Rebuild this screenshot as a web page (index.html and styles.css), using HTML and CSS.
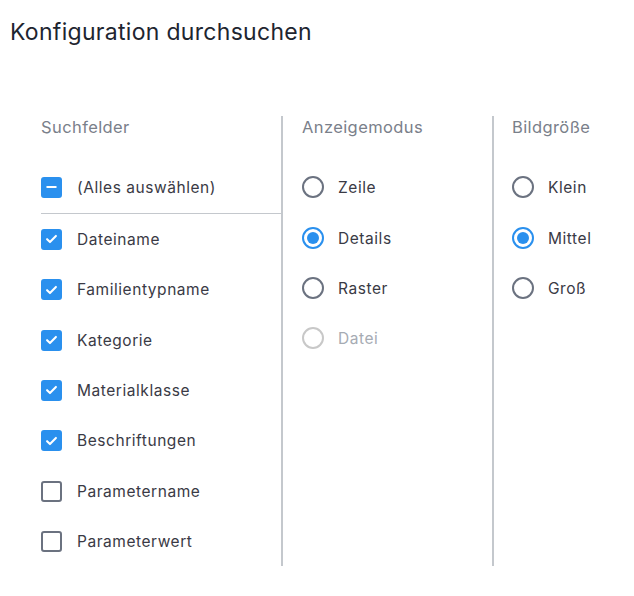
FILE: index.html
```html
<!DOCTYPE html>
<html lang="de">
<head>
<meta charset="utf-8">
<link rel="stylesheet" href="styles.css">
</head>
<body>
<div class="dialog">
  <h1 class="title">Konfiguration durchsuchen</h1>
  <div class="columns">
    <section class="col col-fields">
      <div class="col-head">Suchfelder</div>
      <div class="list">
        <label class="row row-all"><span class="cb cb-mixed"><svg viewBox="0 0 20 20"><path d="M5 10h10" /></svg></span><span class="lbl">(Alles auswählen)</span></label>
        <div class="sep"></div>
        <label class="row"><span class="cb cb-on"><svg viewBox="0 0 20 20"><path d="M4.8 10.2l3.4 3.4 7-7.2" /></svg></span><span class="lbl">Dateiname</span></label>
        <label class="row"><span class="cb cb-on"><svg viewBox="0 0 20 20"><path d="M4.8 10.2l3.4 3.4 7-7.2" /></svg></span><span class="lbl">Familientypname</span></label>
        <label class="row"><span class="cb cb-on"><svg viewBox="0 0 20 20"><path d="M4.8 10.2l3.4 3.4 7-7.2" /></svg></span><span class="lbl">Kategorie</span></label>
        <label class="row"><span class="cb cb-on"><svg viewBox="0 0 20 20"><path d="M4.8 10.2l3.4 3.4 7-7.2" /></svg></span><span class="lbl">Materialklasse</span></label>
        <label class="row"><span class="cb cb-on"><svg viewBox="0 0 20 20"><path d="M4.8 10.2l3.4 3.4 7-7.2" /></svg></span><span class="lbl">Beschriftungen</span></label>
        <label class="row"><span class="cb"></span><span class="lbl">Parametername</span></label>
        <label class="row"><span class="cb"></span><span class="lbl">Parameterwert</span></label>
      </div>
    </section>
    <section class="col col-mode">
      <div class="col-head">Anzeigemodus</div>
      <div class="list">
        <label class="row"><span class="rb"></span><span class="lbl">Zeile</span></label>
        <div class="gap"></div>
        <label class="row"><span class="rb rb-on"></span><span class="lbl">Details</span></label>
        <label class="row"><span class="rb"></span><span class="lbl">Raster</span></label>
        <label class="row row-disabled"><span class="rb"></span><span class="lbl">Datei</span></label>
      </div>
    </section>
    <section class="col col-size">
      <div class="col-head">Bildgröße</div>
      <div class="list">
        <label class="row"><span class="rb"></span><span class="lbl">Klein</span></label>
        <div class="gap"></div>
        <label class="row"><span class="rb rb-on"></span><span class="lbl">Mittel</span></label>
        <label class="row"><span class="rb"></span><span class="lbl">Groß</span></label>
      </div>
    </section>
  </div>
</div>
</body>
</html>
```

FILE: styles.css
```css
* { box-sizing: border-box; }
html, body { margin: 0; background: #ffffff; }
body {
  font-family: Inter, "Noto Sans", sans-serif;
  color: #3c3c48;
}
.dialog { width: 634px; height: 596px; overflow: hidden; }
.title {
  margin: 0;
  padding: 18px 0 0 10px;
  font-size: 23px;
  line-height: 28px;
  font-weight: 400;
  letter-spacing: 0.3px;
  color: #1e2530;
}
.columns {
  display: flex;
  margin-top: 70px;
  padding-left: 41px;
}
.col {
  display: flex;
  flex-direction: column;
  height: 450px;
}
.col-fields { width: 242px; border-right: 2px solid #c4c8cd; }
.col-mode { width: 211px; padding-left: 19px; border-right: 2px solid #c4c8cd; }
.col-size { padding-left: 18px; }
.col-head {
  font-size: 16.5px;
  line-height: 20px;
  height: 20px;
  margin-top: 1px;
  letter-spacing: 0.4px;
  color: #7a808a;
}
.list { margin-top: 25px; display: flex; flex-direction: column; }
.row {
  display: flex;
  align-items: center;
  height: 50px;
  font-size: 15.5px;
  color: #3a3a45;
  letter-spacing: 0.55px;
}
.col-fields .row { width: 240px; height: 50.33px; }
.sep { height: 1px; margin: 1px 0 0; width: 240px; background: #c4c8cd; }
.gap { height: 1px; }
.cb {
  flex: none;
  width: 21px;
  height: 21px;
  border: 2px solid #6b7280;
  border-radius: 3px;
  margin-right: 15px;
  display: flex;
  align-items: center;
  justify-content: center;
}
.cb svg { width: 20px; height: 20px; fill: none; stroke: #ffffff; stroke-width: 2.4; stroke-linecap: round; stroke-linejoin: round; }
.cb-on, .cb-mixed { background: #2a90ee; border-color: #2a90ee; }
.rb {
  flex: none;
  width: 22px;
  height: 22px;
  border: 2px solid #6b7280;
  border-radius: 50%;
  margin-right: 14px;
  display: flex;
  align-items: center;
  justify-content: center;
}
.rb-on { border-color: #2a90ee; }
.rb-on::after {
  content: "";
  width: 12px;
  height: 12px;
  border-radius: 50%;
  background: #2a90ee;
}
.row-disabled { color: #a6abb3; }
.row-disabled .rb { border-color: #c8c8c8; }
```
